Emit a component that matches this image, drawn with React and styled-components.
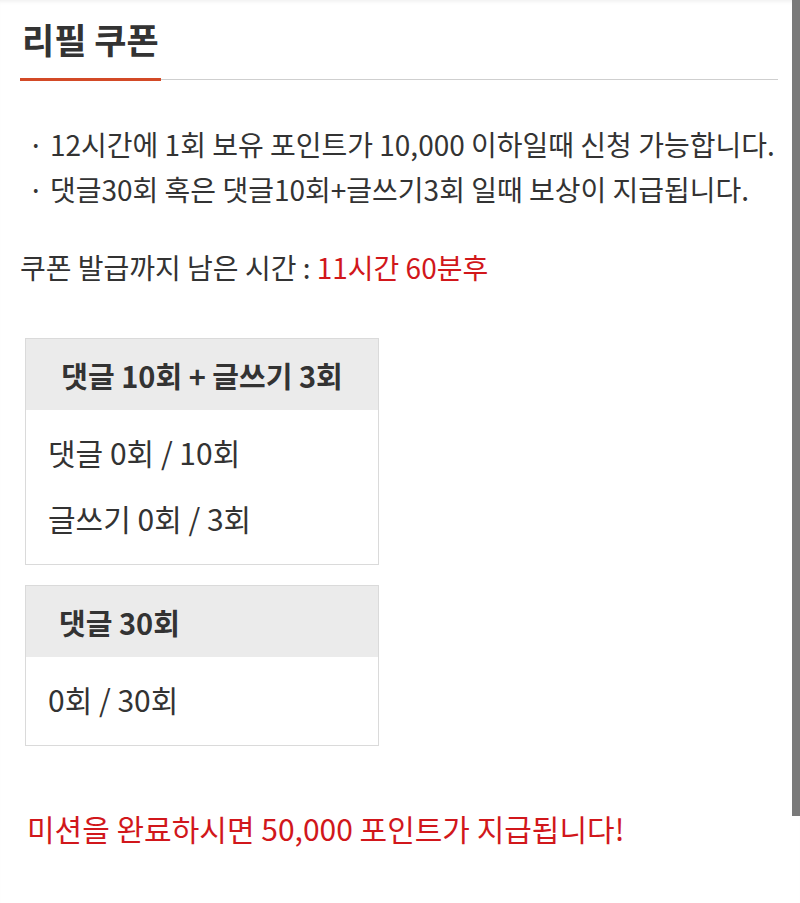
import React from 'react';
import styled, { createGlobalStyle } from 'styled-components';

const GlobalStyle = createGlobalStyle`
  html, body {
    margin: 0;
    padding: 0;
    background: #fff;
  }
  body {
    font-family: "Noto Sans CJK KR", "Noto Sans", sans-serif;
    color: #333;
  }
`;

const Page = styled.div`
  position: relative;
  min-height: 903px;
  padding: 0 22px 0 20px;
  box-shadow: inset 0 4px 4px -3px rgba(0, 0, 0, 0.08);
`;

const Scrollbar = styled.div`
  position: absolute;
  top: 0;
  right: 0;
  width: 8px;
  height: 816px;
  background: #7a7a7a;
`;

const TitleBar = styled.div`
  display: flex;
  border-bottom: 1px solid #cfcfcf;
`;

const Title = styled.h1`
  margin: 0 0 -2px 0;
  padding: 14px 2px;
  font-size: 35px;
  line-height: 50px;
  font-weight: 700;
  color: #333;
  border-bottom: 3px solid #d34a26;
`;

const Notes = styled.ul`
  list-style: none;
  margin: 42px 0 0 0;
  padding: 0 0 0 8px;
`;

const Note = styled.li`
  font-size: 28px;
  line-height: 45px;
`;

const Remaining = styled.p`
  margin: 33px 0 0 0;
  font-size: 28px;
  line-height: 45px;
`;

const Red = styled.span`
  color: #d1171b;
`;

const Boxes = styled.div`
  display: flex;
  flex-direction: column;
  gap: 20px;
  margin: 48px 0 0 5px;
  width: 354px;
`;

const Box = styled.div`
  border: 1px solid #dadada;
`;

const BoxHead = styled.div`
  background: #ebebeb;
  height: 71px;
  display: flex;
  align-items: center;
  justify-content: ${(p) => (p.$center ? 'center' : 'flex-start')};
  padding: ${(p) => (p.$center ? '0' : '0 33px')};
  white-space: nowrap;
  font-size: 29px;
  font-weight: 700;
  color: #333;
`;

const BoxBody = styled.div`
  display: flex;
  flex-direction: column;
  gap: 21px;
  padding: 20px 22px 23px;
`;

const Line = styled.div`
  font-size: 30px;
  line-height: 45px;
`;

const Reward = styled.p`
  margin: 60px 0 0 7px;
  font-size: 30px;
  line-height: 45px;
  color: #d1171b;
`;

export default function App() {
  return (
    <>
      <GlobalStyle />
      <Page>
        <TitleBar>
          <Title>리필 쿠폰</Title>
        </TitleBar>
        <Notes>
          <Note>· 12시간에 1회 보유 포인트가 10,000 이하일때 신청 가능합니다.</Note>
          <Note>· 댓글30회 혹은 댓글10회+글쓰기3회 일때 보상이 지급됩니다.</Note>
        </Notes>
        <Remaining>
          쿠폰 발급까지 남은 시간 : <Red>11시간 60분후</Red>
        </Remaining>
        <Boxes>
          <Box>
            <BoxHead $center>댓글 10회 + 글쓰기 3회</BoxHead>
            <BoxBody>
              <Line>댓글 0회 / 10회</Line>
              <Line>글쓰기 0회 / 3회</Line>
            </BoxBody>
          </Box>
          <Box>
            <BoxHead>댓글 30회</BoxHead>
            <BoxBody>
              <Line>0회 / 30회</Line>
            </BoxBody>
          </Box>
        </Boxes>
        <Reward>미션을 완료하시면 50,000 포인트가 지급됩니다!</Reward>
        <Scrollbar />
      </Page>
    </>
  );
}
